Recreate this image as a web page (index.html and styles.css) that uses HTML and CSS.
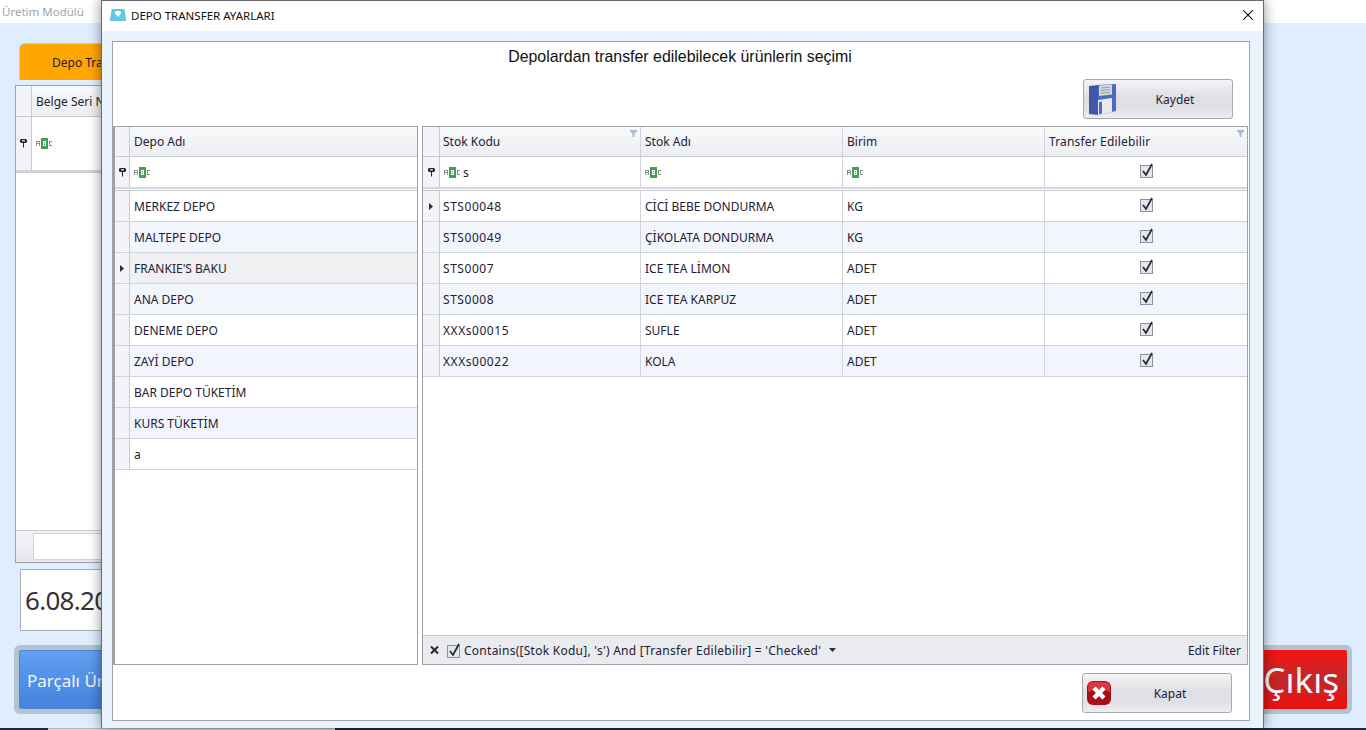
FILE: index.html
```html
<!DOCTYPE html>
<html lang="tr">
<head>
<meta charset="utf-8">
<title>Depo Transfer Ayarları</title>
<link rel="stylesheet" href="styles.css">
</head>
<body>
<svg class="defs" width="0" height="0" aria-hidden="true">
  <symbol id="abc" viewBox="0 0 16 11">
    <path d="M0 3h1v5H0zM3 3h1v5H3zM1 3h2v1H1zM1 5h2v1H1z" fill="#8a8d94"/>
    <rect x="5" y="0" width="7" height="11" fill="#3fa34d"/>
    <path d="M7 3h3v5H7z" fill="#fff"/>
    <path d="M8 4h1v1H8zM8 6h1v1H8z" fill="#3fa34d"/>
    <path d="M13 3h3v1h-2v3h2v1h-3z" fill="#8a8d94"/>
  </symbol>
  <symbol id="pin" viewBox="0 0 7 9">
    <path d="M1 0h5l1 1v2L6 4H4v4l-.5 1L3 8V4H1L0 3V1z" fill="#22242c"/>
    <path d="M2 1h3v1.500H2z" fill="#c8cad2"/>
  </symbol>
  <symbol id="arrow" viewBox="0 0 4 7">
    <path d="M0 0l4 3.500L0 7z" fill="#2a2c36"/>
  </symbol>
  <symbol id="funnel" viewBox="0 0 7 7">
    <path d="M0 0h7v1.500L4.500 3.500V7h-2V3.500L0 1.500z" fill="#a9bbd6"/>
  </symbol>
  <symbol id="check" viewBox="0 0 14 15">
    <rect x="0.500" y="2.500" width="12" height="12" fill="#e4e6ee" stroke="#8f929e"/>
    <path d="M3 8l3 4 6-11" fill="none" stroke="#24262e" stroke-width="1.700"/>
  </symbol>
</svg>

<div class="app">
  <header class="topbar">Üretim Modülü</header>
  <main class="backdrop">
    <div class="tab">Depo Transfer</div>
    <section class="bg-grid">
      <div class="bg-head"><span class="bg-ind"></span><span class="bg-col">Belge Seri No</span></div>
      <div class="bg-filter">
        <span class="bg-ind"><svg class="ic-pin"><use href="#pin"/></svg></span>
        <span class="bg-col"><svg class="ic-abc"><use href="#abc"/></svg></span>
      </div>
      <div class="bg-sep"></div>
      <div class="bg-empty"></div>
      <div class="bg-foot"><span class="bg-input"></span></div>
    </section>
    <div class="date">6.08.2021</div>
    <div class="actions">
      <div class="act act-blue"><span class="act-in">Parçalı Üretim</span></div>
      <div class="act act-red"><span class="act-in">Çıkış</span></div>
    </div>
  </main>
  <footer class="taskbar"><span class="tb-start"></span><span class="tb-search"></span><span class="tb-rest"></span></footer>
</div>

<div class="dialog">
  <div class="dlg-title">
    <svg class="dlg-icon" viewBox="0 0 16 12">
      <path d="M2.500 0h11a1 1 0 0 1 1 1L16 10v2H0v-2L1.500 1a1 1 0 0 1 1-1z" fill="#62c6ea"/>
      <path d="M5 3l1-1h4l1 1v1.500L8 8 5 4.500z" fill="#fff"/>
    </svg>
    <span class="dlg-name">DEPO TRANSFER AYARLARI</span>
    <svg class="dlg-close" viewBox="0 0 10 10"><path d="M0 0l10 10M10 0L0 10" stroke="#111" stroke-width="1.100" fill="none"/></svg>
  </div>
  <div class="dlg-body">
    <div class="panel">
      <h1 class="panel-title">Depolardan transfer edilebilecek ürünlerin seçimi</h1>
      <div class="panel-bar">
        <button class="btn btn-save" type="button">
          <svg class="btn-icon" viewBox="0 0 27 31">
            <path d="M0 2l9-1v30l-9-1z" fill="#3f58a8"/>
            <path d="M9 1l18-1v27l-18 4z" fill="#4a6cc0"/>
            <path d="M10 1.500l13-1v10l-13 1.500z" fill="#d4d7dc"/>
            <path d="M12 4l9-.7M12 6.500l9-.7M12 9l9-.7" stroke="#9a9ea8" fill="none"/>
            <path d="M9 16l14-2v14l-14 3z" fill="#e8eaee"/>
            <path d="M10 18l3-.4v12l-3 .6z" fill="#4a6cc0"/>
          </svg>
          <span class="btn-label">Kaydet</span>
        </button>
      </div>
      <div class="grids">
        <section class="grid grid-left">
          <div class="row head">
            <span class="ind"></span><span class="cell">Depo Adı</span>
          </div>
          <div class="row filter">
            <span class="ind"><svg class="ic-pin"><use href="#pin"/></svg></span>
            <span class="cell"><svg class="ic-abc"><use href="#abc"/></svg></span>
          </div>
          <div class="sep"></div>
          <div class="row"><span class="ind"></span><span class="cell">MERKEZ DEPO</span></div>
          <div class="row alt"><span class="ind"></span><span class="cell">MALTEPE DEPO</span></div>
          <div class="row sel"><span class="ind"><svg class="ic-arrow"><use href="#arrow"/></svg></span><span class="cell">FRANKIE'S BAKU</span></div>
          <div class="row alt"><span class="ind"></span><span class="cell">ANA DEPO</span></div>
          <div class="row"><span class="ind"></span><span class="cell">DENEME DEPO</span></div>
          <div class="row alt"><span class="ind"></span><span class="cell">ZAYİ DEPO</span></div>
          <div class="row"><span class="ind"></span><span class="cell">BAR DEPO TÜKETİM</span></div>
          <div class="row alt"><span class="ind"></span><span class="cell">KURS TÜKETİM</span></div>
          <div class="row"><span class="ind"></span><span class="cell">a</span></div>
        </section>

        <section class="grid grid-right">
          <div class="row head">
            <span class="ind"></span>
            <span class="cell code-head">Stok Kodu<svg class="ic-funnel"><use href="#funnel"/></svg></span>
            <span class="cell">Stok Adı</span>
            <span class="cell">Birim</span>
            <span class="cell wide">Transfer Edilebilir<svg class="ic-funnel"><use href="#funnel"/></svg></span>
          </div>
          <div class="row filter">
            <span class="ind"><svg class="ic-pin"><use href="#pin"/></svg></span>
            <span class="cell"><svg class="ic-abc"><use href="#abc"/></svg><span class="typed">s</span></span>
            <span class="cell"><svg class="ic-abc"><use href="#abc"/></svg></span>
            <span class="cell"><svg class="ic-abc"><use href="#abc"/></svg></span>
            <span class="cell mid"><svg class="ic-check"><use href="#check"/></svg></span>
          </div>
          <div class="sep"></div>
          <div class="row">
            <span class="ind"><svg class="ic-arrow"><use href="#arrow"/></svg></span>
            <span class="cell code">STS00048</span><span class="cell">CİCİ BEBE DONDURMA</span><span class="cell">KG</span>
            <span class="cell mid"><svg class="ic-check"><use href="#check"/></svg></span>
          </div>
          <div class="row alt">
            <span class="ind"></span>
            <span class="cell code">STS00049</span><span class="cell">ÇİKOLATA DONDURMA</span><span class="cell">KG</span>
            <span class="cell mid"><svg class="ic-check"><use href="#check"/></svg></span>
          </div>
          <div class="row">
            <span class="ind"></span>
            <span class="cell code">STS0007</span><span class="cell">ICE TEA LİMON</span><span class="cell">ADET</span>
            <span class="cell mid"><svg class="ic-check"><use href="#check"/></svg></span>
          </div>
          <div class="row alt">
            <span class="ind"></span>
            <span class="cell code">STS0008</span><span class="cell">ICE TEA KARPUZ</span><span class="cell">ADET</span>
            <span class="cell mid"><svg class="ic-check"><use href="#check"/></svg></span>
          </div>
          <div class="row">
            <span class="ind"></span>
            <span class="cell code">XXXs00015</span><span class="cell">SUFLE</span><span class="cell">ADET</span>
            <span class="cell mid"><svg class="ic-check"><use href="#check"/></svg></span>
          </div>
          <div class="row alt">
            <span class="ind"></span>
            <span class="cell code">XXXs00022</span><span class="cell">KOLA</span><span class="cell">ADET</span>
            <span class="cell mid"><svg class="ic-check"><use href="#check"/></svg></span>
          </div>
          <div class="spacer"></div>
          <div class="filter-bar">
            <svg class="fb-x" viewBox="0 0 9 8"><path d="M1 .5l7 7M8 .5l-7 7" stroke="#24262e" stroke-width="2" fill="none"/></svg>
            <svg class="ic-check"><use href="#check"/></svg>
            <span class="fb-text">Contains([Stok Kodu], 's') And [Transfer Edilebilir] = 'Checked'</span>
            <svg class="fb-caret" viewBox="0 0 7 4"><path d="M0 0h7L3.500 4z" fill="#2a2c36"/></svg>
            <span class="fb-edit">Edit Filter</span>
          </div>
        </section>
      </div>
      <div class="panel-foot">
        <button class="btn btn-close" type="button">
          <svg class="btn-icon-x" viewBox="0 0 24 24">
            <rect width="24" height="24" rx="6" fill="#a80f16"/>
            <path d="M1 11Q12 5 23 11V6Q23 1 18 1H6Q1 1 1 6z" fill="#d63a3e"/>
            <path d="M7 7l10 10M17 7L7 17" stroke="#fff" stroke-width="4.500" fill="none"/>
          </svg>
          <span class="btn-label">Kapat</span>
        </button>
      </div>
    </div>
  </div>
</div>
</body>
</html>
```

FILE: styles.css
```css
* { box-sizing: border-box; }
html, body { margin: 0; height: 100%; overflow: hidden; }
body {
  position: relative;
  width: 1366px;
  height: 730px;
  font-family: "Noto Sans", sans-serif;
  font-size: 12px;
  color: #1f2033;
}
.defs { position: absolute; }

/* background application */
.app { display: flex; flex-direction: column; height: 730px; background: #dfeefe; }
.topbar {
  height: 23px; flex: none; background: #fff; color: #a2a4aa;
  padding: 4px 0 0 2px; font-size: 11.5px; line-height: 16px;
}
.backdrop { flex: none; height: 705px; padding: 20px 14px 0; display: flex; flex-direction: column; }
.tab {
  width: 200px; height: 37px; margin-left: 5px; background: #ffa600;
  border-radius: 6px 0 0 0; border-top: 1px solid #b9cde4; border-left: 1px solid #b9cde4;
  padding-left: 32px; line-height: 37px;
}
.bg-grid {
  width: 1000px; height: 478px; margin: 5px 0 0 1px; background: #fff; border: 1px solid #a0a0a8;
  display: flex; flex-direction: column;
}
.bg-head, .bg-filter { display: flex; flex: none; border-bottom: 1px solid #c8cad2; }
.bg-head { height: 31px; background: linear-gradient(#f8f9fa, #eceef2); line-height: 29px; }
.bg-filter { height: 53px; border-bottom: none; }
.bg-ind {
  width: 16px; flex: none; border-right: 1px solid #c8cad2; background: #f3f4f7;
  display: flex; align-items: center; justify-content: center;
}
.bg-col { padding-left: 4px; display: flex; align-items: center; }
.bg-sep { flex: none; height: 3px; background: #d4d6dc; border-bottom: 1px solid #c8cad2; }
.bg-empty { flex: 1; }
.bg-foot { flex: none; height: 32px; background: linear-gradient(#f3f4f6, #e6e7ea); border-top: 1px solid #c8cad2; padding: 2px 0 0 17px; }
.bg-input { display: block; width: 300px; height: 27px; background: #fff; border: 1px solid #d0d2d8; }
.date {
  width: 300px; height: 62px; margin: 6px 0 14px 6px; background: #fff; border: 1px solid #a8b0b8;
  font-size: 26px; letter-spacing: -.7px; line-height: 60px; padding-left: 4px; color: #333;
}
.actions { display: flex; justify-content: space-between; height: 69px; }
.act { width: 300px; border-radius: 6px; background: #b5c3d1; padding: 5px; }
.act-in {
  display: flex; align-items: center; height: 59px; border-radius: 2px; color: #f2f6fc;
}
.act-blue .act-in { background: linear-gradient(#62a0ee, #4f8fe6 55%, #4684dc); border: 1px solid #4b86d8; font-size: 17px; padding: 2px 0 0 7px; }
.act-red .act-in { background: linear-gradient(#f51414, #c02828 50%, #f01010); justify-content: flex-end; font-size: 35px; padding-right: 8px; }
.taskbar { flex: none; height: 2px; display: flex; background: #1c2c3a; }
.tb-start { width: 48px; }
.tb-search { width: 287px; background: #dcdee0; border-top: 1px solid #b4b8bc; }
.tb-rest { flex: 1; }

/* dialog */
.dialog {
  position: absolute; left: 101px; top: 0; width: 1163px; height: 728px;
  background: #e8f3fe; border: 1px solid #6c6c70; border-bottom: none;
  display: flex; flex-direction: column;
  box-shadow: 0 0 12px rgba(0, 0, 0, .45);
}
.dlg-title {
  flex: none; height: 30px; background: #fff; display: flex; align-items: center; padding: 0 10px 2px 8px;
}
.dlg-icon { width: 16px; height: 12px; flex: none; margin-right: 5px; }
.dlg-name { flex: 1; color: #111; font-size: 11.5px; }
.dlg-close { width: 10px; height: 10px; flex: none; }
.dlg-body { flex: 1; padding: 10px 13px 7px 10px; display: flex; min-height: 0; }
.panel {
  flex: 1; background: #fff; border: 1px solid #a0a0a8; display: flex; flex-direction: column; min-width: 0;
}
.panel-title {
  margin: 0; height: 37px; padding: 5px 2px 0 0; text-align: center;
  font-family: "Liberation Sans", sans-serif; font-size: 15.9px; font-weight: 400; line-height: 20px; color: #111;
}
.panel-bar { flex: none; height: 47px; display: flex; justify-content: flex-end; padding-right: 16px; }
.btn {
  width: 150px; height: 40px; padding: 0; display: flex; align-items: center; position: relative;
  border: 1px solid #a8aab2; border-radius: 3px;
  background: linear-gradient(#f4f4f6, #dfe0e5 45%, #e0e1e6 75%, #eeeef1);
  font: inherit; color: #1f2033;
}
.btn-label { flex: 1; text-align: center; }
.btn-save .btn-label { padding-left: 2px; }
.btn-close .btn-label { padding-right: 2px; }
.btn-icon { width: 27px; height: 31px; flex: none; margin-left: 5px; }
.btn-icon-x { width: 24px; height: 24px; flex: none; margin-left: 4px; }

.grids { flex: none; height: 539px; display: flex; gap: 4px; }
.grid {
  display: flex; flex-direction: column; background: #fff;
  border: 1px solid #a0a0a8; overflow: hidden;
}
.grid-left { width: 305px; border-left-width: 2px; --cols: 15px 1fr; }
.grid-right { width: 826px; --cols: 17px 201px 202px 202px 1fr; }
.row {
  flex: none; display: grid; grid-template-columns: var(--cols);
  height: 31px; border-bottom: 1px solid #d0d2dc;
}
.row.alt { background: #f2f5fb; }
.row.sel { background: #f0f0f2; }
.row.head { height: 30px; background: linear-gradient(#f8f9fa, #eceef2); border-bottom-color: #c8cad2; }
.row.filter { height: 30px; border-bottom: none; }
.sep { flex: none; height: 4px; background: linear-gradient(#d6d8de 0 2px, #fff 2px 3px, #c8cad2 3px); }
.ind {
  display: flex; align-items: center; justify-content: center;
  background: #f3f4f7; border-right: 1px solid #c8cad2;
}
.cell {
  position: relative; display: flex; align-items: center; padding-left: 4px;
  border-right: 1px solid #d0d2dc; white-space: nowrap; overflow: hidden;
}
.grid-left .cell { border-right: none; }
.cell:last-child { border-right: none; }
.cell.mid { justify-content: center; padding-left: 1px; padding-bottom: 3px; }
.cell.code { padding-left: 3px; letter-spacing: .55px; }
.cell.code-head { padding-left: 3px; }
.cell.wide { letter-spacing: .16px; }
.ic-abc { width: 16px; height: 11px; flex: none; }
.ic-pin { width: 7px; height: 9px; }
.ic-arrow { width: 4px; height: 7px; }
.ic-check { width: 14px; height: 15px; flex: none; }
.ic-funnel { position: absolute; top: 3px; right: 3px; width: 7px; height: 7px; }
.typed { margin-left: 3px; }
.spacer { flex: 1; }
.filter-bar {
  flex: none; height: 29px; background: #e9ebef; border-top: 1px solid #c8cad2;
  display: flex; align-items: center; padding: 0 6px 0 7px;
}
.fb-x { width: 9px; height: 8px; flex: none; margin-right: 8px; }
.fb-text { margin-left: 3px; letter-spacing: .26px; }
.fb-caret { width: 7px; height: 4px; flex: none; margin-left: 8px; }
.fb-edit { margin-left: auto; }
.panel-foot { flex: 1; display: flex; justify-content: flex-end; padding: 8px 17px 0 0; }
```
